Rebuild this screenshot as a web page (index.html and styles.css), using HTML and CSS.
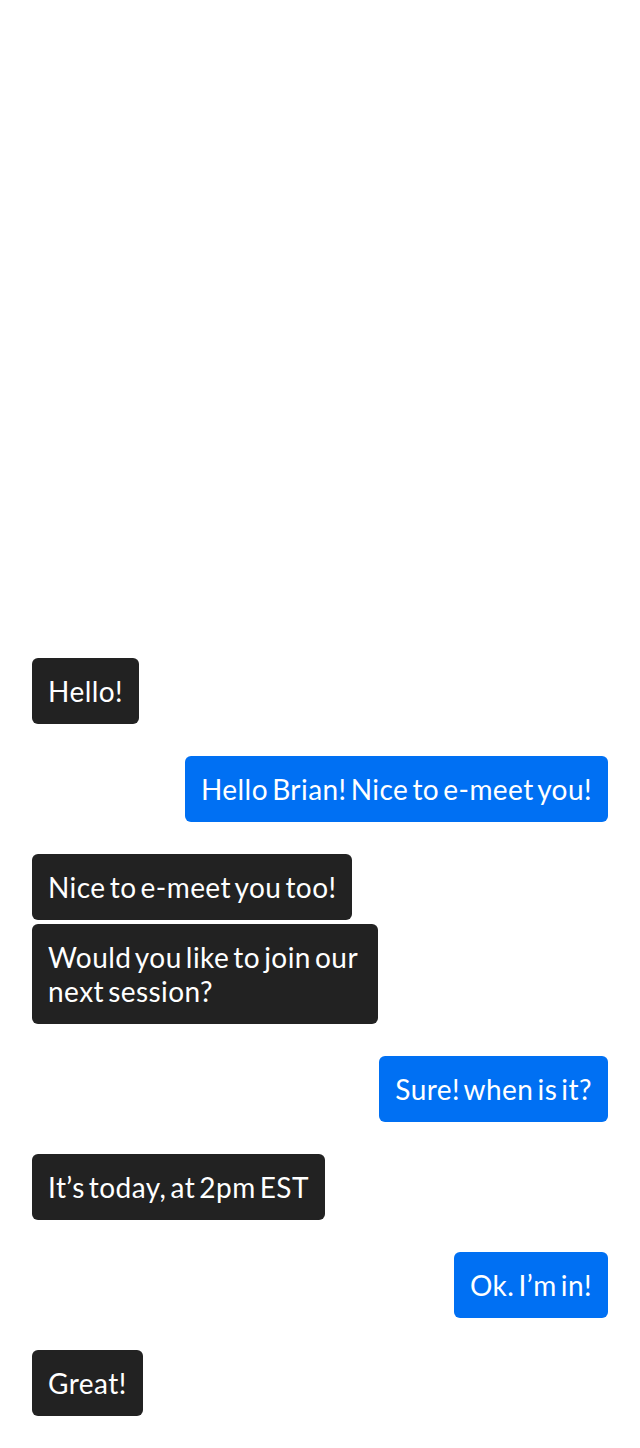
FILE: index.html
```html
<!DOCTYPE html>
<html lang="en">
<head>
<meta charset="utf-8">
<title>Chat</title>
<link rel="stylesheet" href="styles.css">
</head>
<body>
<main class="chat">
  <div class="group them"><div class="bubble">Hello!</div></div>
  <div class="group me"><div class="bubble">Hello Brian! Nice to e-meet you!</div></div>
  <div class="group them">
    <div class="bubble">Nice to e-meet you too!</div>
    <div class="bubble">Would you like to join our next session?</div>
  </div>
  <div class="group me"><div class="bubble">Sure! when is it?</div></div>
  <div class="group them"><div class="bubble">It’s today, at 2pm EST</div></div>
  <div class="group me"><div class="bubble">Ok. I’m in!</div></div>
  <div class="group them"><div class="bubble">Great!</div></div>
</main>
</body>
</html>
```

FILE: styles.css
```css
html, body {
  margin: 0;
  padding: 0;
  background: #ffffff;
}

body {
  font-family: Lato, "Liberation Sans", sans-serif;
}

.chat {
  box-sizing: border-box;
  min-height: 100vh;
  padding: 32px;
  display: flex;
  flex-direction: column;
  justify-content: flex-end;
  gap: 32px;
}

.group {
  display: flex;
  flex-direction: column;
  gap: 4px;
}

.them { align-items: flex-start; }
.me { align-items: flex-end; }

.bubble {
  box-sizing: border-box;
  max-width: 60%;
  padding: 16px;
  border-radius: 6px;
  font-size: 28px;
  letter-spacing: 0.45px;
  word-spacing: -3.5px;
  line-height: 34px;
  color: #ffffff;
}

.them .bubble { background: #222222; }
.me .bubble { background: #0070f3; max-width: none; }
```
